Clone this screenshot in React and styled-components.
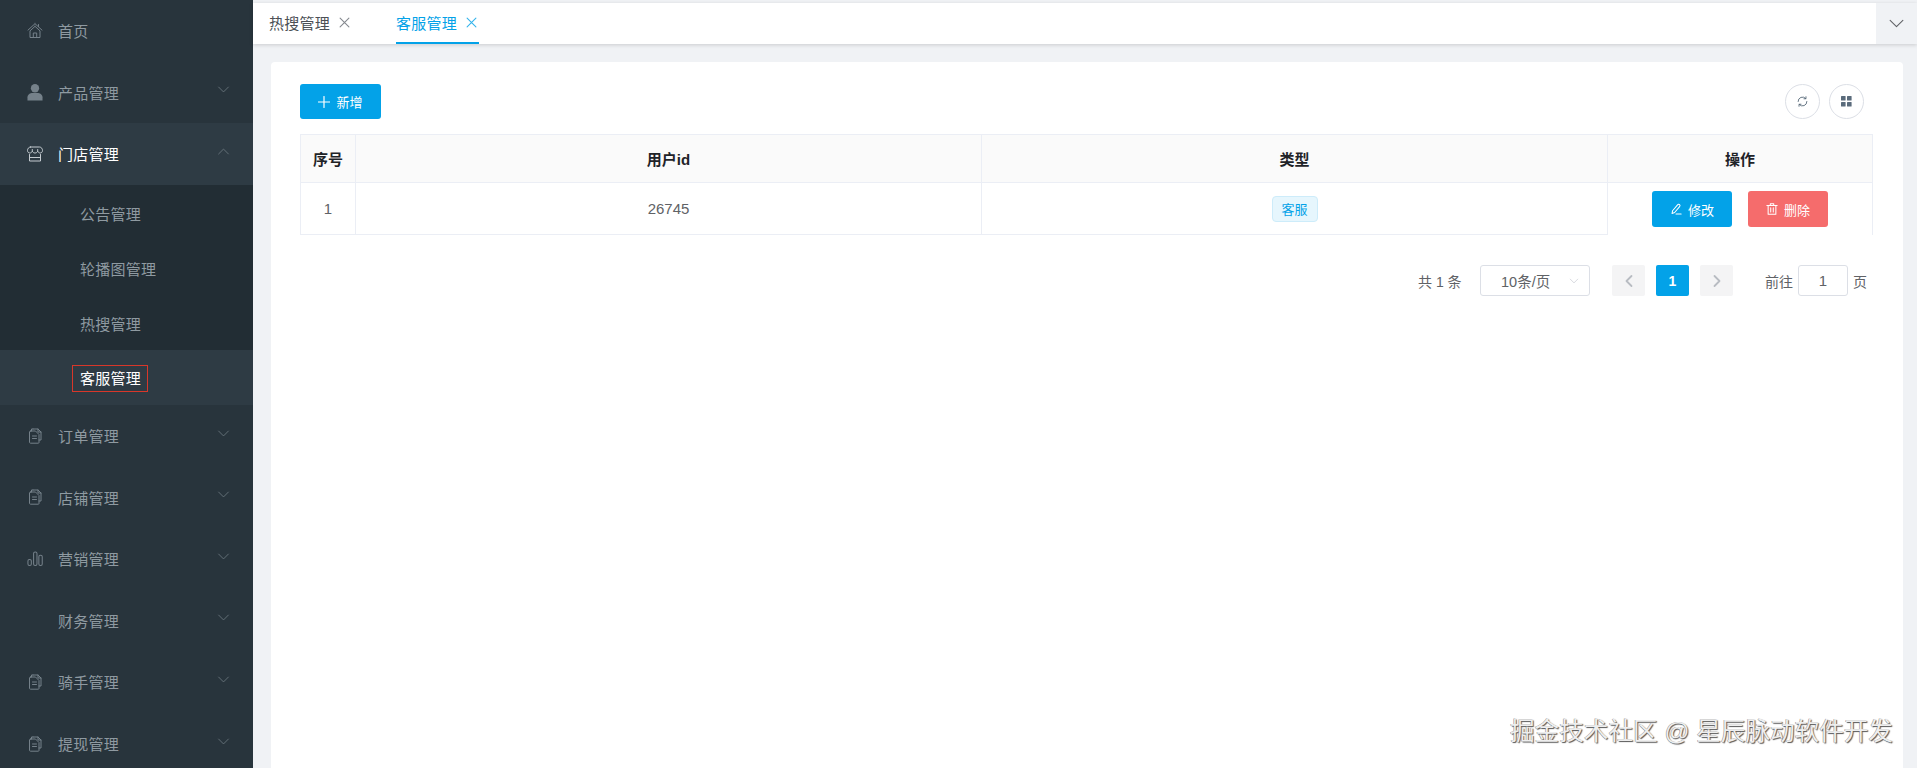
import React from "react";
import styled, { createGlobalStyle } from "styled-components";

const Global = createGlobalStyle`
  html, body { margin: 0; padding: 0; height: 768px; overflow: hidden; background: #f0f2f5; }
  * { box-sizing: border-box; }
  body { font-family: "Liberation Sans", "Noto Sans CJK SC", sans-serif; font-size: 14px; color: #606266; }
`;

const Page = styled.div`
  display: flex;
  width: 1917px;
  height: 768px;
  overflow: hidden;
  position: relative;
`;
const Sidebar = styled.nav`
  width: 253px;
  flex: none;
  background: #28343c;
  overflow: hidden;
`;
const MenuRow = styled.div`
  height: 61.6px;
  flex: none;
  display: flex;
  align-items: center;
  padding-left: 27px;
  padding-right: 23px;
  font-size: 15px;
  letter-spacing: 0.25px;
  background: ${p => (p.$open ? "#2e3b44" : "transparent")};
  color: ${p => (p.$open ? "#fff" : "#8f9aa1")};
`;
const IconSlot = styled.span`
  width: 16px;
  height: 18px;
  margin-right: 15px;
  flex: none;
  display: flex;
  align-items: center;
  justify-content: center;
  color: ${p => (p.$open ? "#c4cbd0" : "#75818a")};
`;
const MenuLabel = styled.span`
  flex: 1;
`;
const Caret = styled.span`
  display: flex;
  margin-bottom: 5px;
  color: #6f7b83;
`;
const SubMenu = styled.div`
  background: #222d34;
`;
const SubRow = styled.div`
  height: 55px;
  display: flex;
  align-items: center;
  padding: 3px 0 0 80px;
  font-size: 15px;
  letter-spacing: 0.25px;
  background: ${p => (p.$active ? "#2e3b44" : "transparent")};
  color: ${p => (p.$active ? "#fff" : "#8f9aa1")};
`;
const Highlight = styled.span`
  border: 1px solid #d8372a;
  padding: 3px 6px 3px 7px;
  margin-left: -8px;
  line-height: 19px;
`;
const Main = styled.main`
  flex: 1;
  min-width: 0;
  display: flex;
  flex-direction: column;
  padding-top: 3px;
  background: #f0f2f5;
`;
const TabBar = styled.div`
  height: 41px;
  flex: none;
  display: flex;
  background: #fff;
  box-shadow: 0 1px 4px rgba(0, 0, 0, 0.16);
  position: relative;
`;
const Tabs = styled.div`
  flex: 1;
  display: flex;
  padding-left: 16px;
  gap: 46px;
`;
const Tab = styled.div`
  height: 41px;
  display: flex;
  align-items: center;
  gap: 9px;
  padding-right: ${p => (p.$active ? "2px" : "0")};
  color: ${p => (p.$active ? "#03a2e8" : "#4b4f55")};
  border-bottom: 2px solid ${p => (p.$active ? "#03a2e8" : "transparent")};
  font-size: 15px;
  letter-spacing: 0.25px;
`;
const TabClose = styled.span`
  display: flex;
  color: ${p => (p.$active ? "#35b4ec" : "#85898f")};
`;
const TabArrow = styled.div`
  width: 41px;
  background: #f0f2f5;
  display: flex;
  align-items: center;
  justify-content: center;
  color: #606266;
`;
const Card = styled.section`
  flex: 1;
  margin: 18px 14px 0 18px;
  background: #fff;
  border-radius: 4px 4px 0 0;
  padding: 22px 29px 0;
`;
const Toolbar = styled.div`
  display: flex;
  justify-content: space-between;
  height: 35px;
  margin-bottom: 15px;
`;
const Button = styled.button`
  border: 0;
  border-radius: 3px;
  width: ${p => p.$w}px;
  height: ${p => p.$h}px;
  background: ${p => (p.$danger ? "#f56c6c" : "#03a2e8")};
  color: #fff;
  font: inherit;
  font-size: 13px;
  display: inline-flex;
  align-items: center;
  justify-content: center;
  gap: 6px;
  padding: 0;
`;
const ToolRight = styled.div`
  display: flex;
  gap: 9px;
  padding-right: 10px;
`;
const CircleBtn = styled.div`
  width: 35px;
  height: 35px;
  border-radius: 50%;
  border: 1px solid #dcdfe6;
  display: flex;
  align-items: center;
  justify-content: center;
  color: #5a6b7b;
`;
const Table = styled.div`
  width: 1573px;
  display: grid;
  grid-template-columns: 56px 626px 626px 265px;
  border-top: 1px solid #ebeef5;
`;
const HeadCell = styled.div`
  height: 48px;
  background: #fafafa;
  border-bottom: 1px solid #ebeef5;
  border-left: ${p => (p.$first ? "1px solid #ebeef5" : "0")};
  border-right: 1px solid #ebeef5;
  display: flex;
  align-items: center;
  justify-content: center;
  font-weight: 700;
  font-size: 15px;
  color: #1f2328;
`;
const BodyCell = styled.div`
  height: 52px;
  border-bottom: ${p => (p.$last ? "0" : "1px solid #ebeef5")};
  border-left: ${p => (p.$first ? "1px solid #ebeef5" : "0")};
  border-right: 1px solid #ebeef5;
  display: flex;
  align-items: center;
  justify-content: center;
  gap: 16px;
  font-size: 15px;
  color: #606266;
`;
const Tag = styled.span`
  width: 46px;
  height: 26px;
  border-radius: 4px;
  border: 1px solid #cdecfa;
  background: #e6f6fd;
  color: #03a2e8;
  font-size: 13px;
  display: flex;
  align-items: center;
  justify-content: center;
`;
const Pager = styled.div`
  display: flex;
  align-items: center;
  height: 31px;
  margin-top: 30px;
  margin-left: 1118px;
  font-size: 14px;
  color: #606266;
`;
const PagerText = styled.span`
  width: ${p => p.$w}px;
  margin-right: ${p => p.$mr || 0}px;
  flex: none;
  white-space: nowrap;
`;
const SizeSelect = styled.div`
  width: 110px;
  height: 31px;
  border: 1px solid #dcdfe6;
  border-radius: 3px;
  margin-right: 22px;
  padding: 0 10px 0 20px;
  display: flex;
  align-items: center;
  justify-content: space-between;
  flex: none;
  font-size: 14.5px;
  color: #606266;
`;
const SelectCaret = styled.span`
  display: flex;
  color: #c0c4cc;
`;
const PageBtn = styled.div`
  width: 33px;
  height: 31px;
  margin-right: ${p => p.$mr}px;
  border-radius: 2px;
  flex: none;
  display: flex;
  align-items: center;
  justify-content: center;
  font-weight: 700;
  background: ${p => (p.$active ? "#03a2e8" : "#f4f4f5")};
  color: ${p => (p.$active ? "#fff" : "#b8bcc2")};
`;
const JumpInput = styled.div`
  width: 50px;
  height: 31px;
  margin: 0 5px;
  flex: none;
  border: 1px solid #dcdfe6;
  border-radius: 3px;
  display: flex;
  align-items: center;
  justify-content: center;
  font-size: 15px;
`;
const Watermark = styled.div`
  position: absolute;
  left: 1510px;
  top: 716px;
  font-size: 24.6px;
  line-height: 32px;
  white-space: nowrap;
  color: #eeeeee;
  text-shadow: 1px 1px 1px #555, -0.5px -0.5px 0.5px #888;
`;

const Line = ({ size = 16, sw = 1, children, vb = 16, fill = "none" }) => (
  <svg width={size} height={size} viewBox={`0 0 ${vb} ${vb}`} fill={fill} stroke="currentColor" strokeWidth={sw} strokeLinecap="round" strokeLinejoin="round">
    {children}
  </svg>
);
const HomeIcon = () => (
  <Line size={17}>
    <path d="M8 1.2 L1 7.6 M8 1.2 L15 7.6 M8 3.8 L3 8.4 V15 H13 V8.4 L8 3.8 M6.3 15 V10.5 H9.7 V15 M11.5 2 V4" />
  </Line>
);
const UserIcon = () => (
  <svg width="17" height="18" viewBox="0 0 17 18" fill="currentColor">
    <circle cx="8.5" cy="5" r="4.4" />
    <path d="M0.5 18 V14.5 C0.5 11.5 3.5 10 6 10 H11 C13.5 10 16.5 11.5 16.5 14.5 V18 Z" />
  </svg>
);
const StoreIcon = () => (
  <Line size={17}>
    <path d="M3.5 1.5 H12.5 C14.5 1.5 15.5 3.5 15.5 5 C15.5 6.5 14.5 7.5 13.2 7.5 C12 7.5 11.2 6.8 10.7 5.8 C10.2 6.8 9.2 7.5 8 7.5 C6.8 7.5 5.8 6.8 5.3 5.8 C4.8 6.8 4 7.5 2.8 7.5 C1.5 7.5 0.5 6.5 0.5 5 C0.5 3.5 1.5 1.5 3.5 1.5 Z M2.5 9 V15.5 H13.5 V9 M2.5 12 H13.5 M5.3 4 V5.8 M10.7 4 V5.8" />
  </Line>
);
const DocIcon = () => (
  <Line size={16}>
    <path d="M6 1 H11 L14 4 V12 H12 M6 1 H4.5 V3 M11 1 V4 H14 M3.5 3 H8.5 L12 6.5 V14.5 C12 15 11.7 15.2 11.2 15.2 H3.5 C3 15.2 2.5 14.9 2.5 14.4 V4 C2.5 3.4 3 3 3.5 3 Z M5.5 8 H9.5 M5.5 10.5 H9.5" />
  </Line>
);
const BarsIcon = () => (
  <svg width="17" height="17" viewBox="0 0 17 17" fill="none" stroke="currentColor" strokeWidth="1.1" shapeRendering="geometricPrecision">
    <rect x="1" y="9.5" width="3.6" height="6.5" rx="1.6" />
    <rect x="7" y="1.5" width="3.6" height="14.5" rx="1.6" />
    <rect x="12.6" y="5" width="3.6" height="11" rx="1.6" />
  </svg>
);
const Chevron = ({ up, size = 13 }) => (
  <Line size={size} sw={1}>
    <path d={up ? "M2 11 L8 5 L14 11" : "M2 5 L8 11 L14 5"} />
  </Line>
);
const CloseIcon = () => (
  <Line size={11} sw={1} vb={10}>
    <path d="M1 1 L9 9 M9 1 L1 9" />
  </Line>
);
const PlusIcon = () => (
  <Line size={12} sw={1.2} vb={12}>
    <path d="M6 0.5 V11.5 M0.5 6 H11.5" />
  </Line>
);
const EditIcon = () => (
  <Line size={12} sw={1.2} vb={14}>
    <path d="M3 9 L8.8 2.2 C9.5 1.4 10.5 1.3 11.2 2 C11.9 2.7 11.8 3.6 11.2 4.3 L5.4 11.1 L2.4 12.3 Z M7 12.8 H13" />
  </Line>
);
const TrashIcon = () => (
  <Line size={12} sw={1.2} vb={14}>
    <path d="M1 3 H13 M5 3 V1 H9 V3 M2.5 3 V13 H11.5 V3 M5.5 5.5 V10.5 M8.5 5.5 V10.5" />
  </Line>
);
const RefreshIcon = () => (
  <Line size={11} sw={1} vb={12}>
    <path d="M1.2 6 A4.8 4.8 0 0 1 9.6 2.8 M10.8 6 A4.8 4.8 0 0 1 2.4 9.2 M9.8 0.8 V3 H7.6 M2.2 11.2 V9 H4.4" />
  </Line>
);
const GridIcon = () => (
  <svg width="11" height="11" viewBox="0 0 11 11" fill="currentColor">
    <rect x="0" y="0" width="4.6" height="4.6" rx="0.6" />
    <rect x="6" y="0" width="4.6" height="4.6" rx="0.6" />
    <rect x="0" y="6" width="4.6" height="4.6" rx="0.6" />
    <rect x="6" y="6" width="4.6" height="4.6" rx="0.6" />
  </svg>
);
const PagerArrow = ({ d }) => (
  <Line size={16} sw={1.8}>
    <path d={d} />
  </Line>
);

const bottomItems = [
  { label: "订单管理", icon: <DocIcon /> },
  { label: "店铺管理", icon: <DocIcon /> },
  { label: "营销管理", icon: <BarsIcon /> },
  { label: "财务管理", icon: null },
  { label: "骑手管理", icon: <DocIcon /> },
  { label: "提现管理", icon: <DocIcon /> },
];

export default function App() {
  return (
    <Page>
      <Global />
      <Sidebar>
        <MenuRow>
          <IconSlot><HomeIcon /></IconSlot>
          <MenuLabel>首页</MenuLabel>
        </MenuRow>
        <MenuRow>
          <IconSlot><UserIcon /></IconSlot>
          <MenuLabel>产品管理</MenuLabel>
          <Caret><Chevron /></Caret>
        </MenuRow>
        <MenuRow $open>
          <IconSlot $open><StoreIcon /></IconSlot>
          <MenuLabel>门店管理</MenuLabel>
          <Caret><Chevron up /></Caret>
        </MenuRow>
        <SubMenu>
          <SubRow>公告管理</SubRow>
          <SubRow>轮播图管理</SubRow>
          <SubRow>热搜管理</SubRow>
          <SubRow $active><Highlight>客服管理</Highlight></SubRow>
        </SubMenu>
        {bottomItems.map(it => (
          <MenuRow key={it.label}>
            <IconSlot>{it.icon}</IconSlot>
            <MenuLabel>{it.label}</MenuLabel>
            <Caret><Chevron /></Caret>
          </MenuRow>
        ))}
      </Sidebar>
      <Main>
        <TabBar>
          <Tabs>
            <Tab>热搜管理<TabClose><CloseIcon /></TabClose></Tab>
            <Tab $active>客服管理<TabClose $active><CloseIcon /></TabClose></Tab>
          </Tabs>
          <TabArrow><Chevron size={17} /></TabArrow>
        </TabBar>
        <Card>
          <Toolbar>
            <Button $w={81} $h={35}><PlusIcon />新增</Button>
            <ToolRight>
              <CircleBtn><RefreshIcon /></CircleBtn>
              <CircleBtn><GridIcon /></CircleBtn>
            </ToolRight>
          </Toolbar>
          <Table>
            <HeadCell $first>序号</HeadCell>
            <HeadCell>用户id</HeadCell>
            <HeadCell>类型</HeadCell>
            <HeadCell>操作</HeadCell>
            <BodyCell $first>1</BodyCell>
            <BodyCell>26745</BodyCell>
            <BodyCell><Tag>客服</Tag></BodyCell>
            <BodyCell $last>
              <Button $w={80} $h={36}><EditIcon />修改</Button>
              <Button $w={80} $h={36} $danger><TrashIcon />删除</Button>
            </BodyCell>
          </Table>
          <Pager>
            <PagerText $w={45} $mr={17}>共 1 条</PagerText>
            <SizeSelect>10条/页<SelectCaret><Chevron size={10} /></SelectCaret></SizeSelect>
            <PageBtn $mr={11}><PagerArrow d="M10.5 3 L5.5 8 L10.5 13" /></PageBtn>
            <PageBtn $mr={11} $active>1</PageBtn>
            <PageBtn $mr={32}><PagerArrow d="M5.5 3 L10.5 8 L5.5 13" /></PageBtn>
            <PagerText $w={28}>前往</PagerText>
            <JumpInput>1</JumpInput>
            <PagerText $w={14}>页</PagerText>
          </Pager>
        </Card>
      </Main>
      <Watermark>掘金技术社区 @ 星辰脉动软件开发</Watermark>
    </Page>
  );
}
